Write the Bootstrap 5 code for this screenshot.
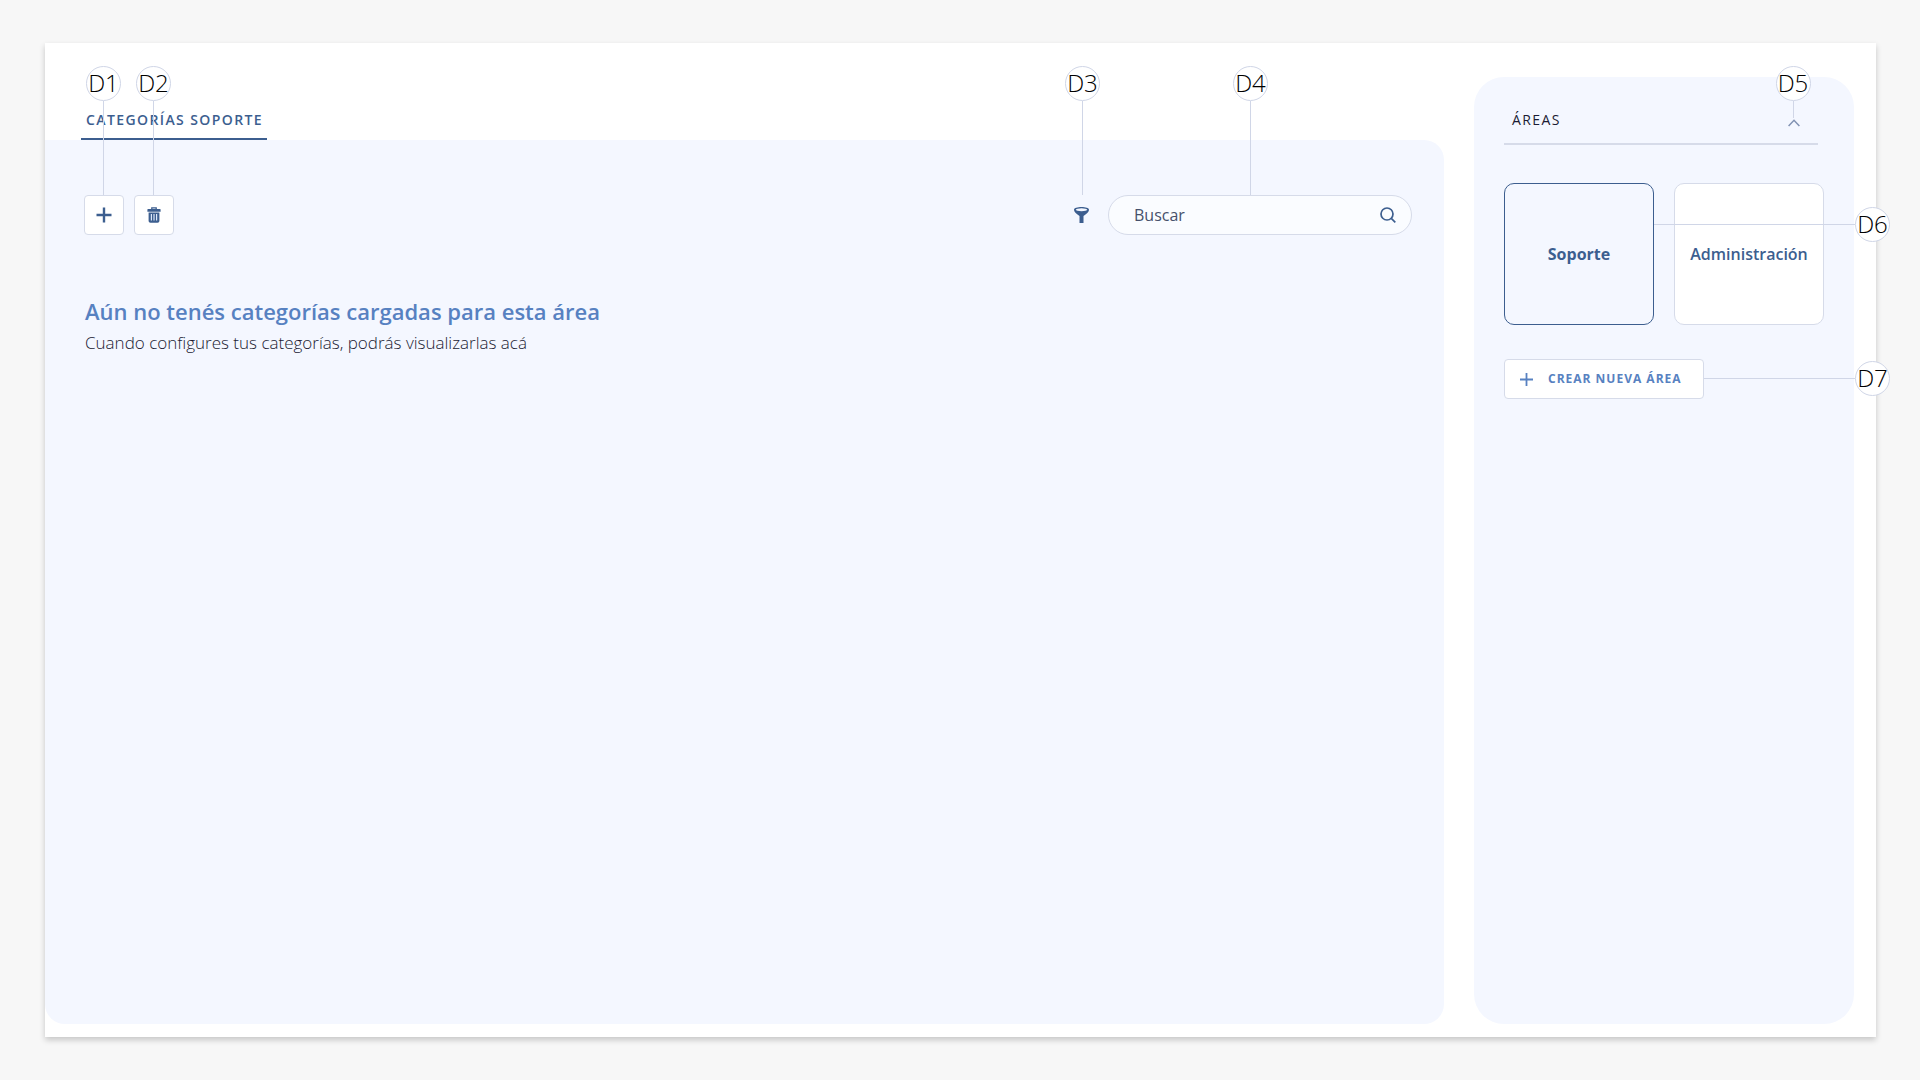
<!DOCTYPE html>
<html lang="es">
<head>
<meta charset="utf-8">
<meta name="viewport" content="width=device-width, initial-scale=1">
<title>Categorías soporte</title>
<link href="https://cdn.jsdelivr.net/npm/bootstrap@5.3.0/dist/css/bootstrap.min.css" rel="stylesheet">
<style>
  :root { --navy: #3c5e8f; --blue: #5781c1; --line: #d6dbe9; --stem: #d0d6e7; --panel: #f4f7ff; --ink: #1b1b33; }
  body { font-family: "Open Sans", "Noto Sans", sans-serif; background: #f7f7f7; color: var(--ink); }
  .page-frame { padding: 43px 44px 43px 45px; }
  .sheet { background: #fff; box-shadow: 0 3px 6px rgba(0,0,0,.2); padding: 0 22px 13px 0; gap: 30px; }
  .tab-strip { padding: 54px 36px 0; }
  .tab-link { display: block; color: var(--navy); font-size: 14px; line-height: 20px; font-weight: 600; letter-spacing: .1em;
    padding: 13px 4px 8px 5px; border-bottom: 2px solid var(--navy); text-decoration: none; white-space: nowrap; height: 43px; }
  .main-panel { background: var(--panel); border-radius: 0 20px 20px 20px; padding: 55px 32px 32px 39px; }
  .tool-list { gap: 10px; }
  .search-list { gap: 18px; }
  .tool-btn { width: 40px; height: 40px; background: #fff; border: 1px solid var(--line); border-radius: 4px; color: var(--navy); }
  .tool-btn:hover { background: #fff; border-color: var(--navy); color: var(--navy); }
  .filter-btn { width: 18px; height: 40px; border: 0; background: none; color: var(--navy); }
  .search-box { width: 304px; height: 40px; background: #fafcff; border: 1px solid var(--line); border-radius: 20px; padding: 0 15px 0 25px; color: var(--navy); }
  .search-box input { font-size: 16px; border: 0; background: none; outline: 0; min-width: 0; color: #46506b; }
  .search-box input::placeholder { color: #46506b; opacity: 1; }
  .search-box button { border: 0; background: none; color: var(--navy); width: 16px; }
  .empty-note { margin-top: 61px; padding-left: 1px; }
  .empty-title { color: var(--blue); font-size: 22px; line-height: 30px; font-weight: 600; margin: 0 0 5px; }
  .empty-text { font-size: 17px; line-height: 24px; font-weight: 300; }
  .side-panel { width: 380px; margin-top: 34px; background: var(--panel); border-radius: 30px; padding: 24px 30px 30px; }
  .area-head { border-bottom: 2px solid var(--line); padding: 0 16px 0 8px; margin-right: 6px; height: 44px; }
  .area-head h2 { font-size: 14px; line-height: 38px; font-weight: 500; letter-spacing: .1em; }
  .fold-spot { margin-top: 17px; }
  .fold-btn { width: 17px; height: 10px; border: 0; background: none; color: #8192b3; }
  .area-list { gap: 20px; margin-top: 38px; margin-bottom: 34px; }
  .area-tile { width: 150px; height: 142px; background: #fff; border: 1px solid var(--line); border-radius: 10px; color: var(--navy); font-size: 16px; font-weight: 600; }
  .area-tile.chosen { background: var(--panel); border-color: var(--navy); font-weight: 700; }
  .new-area { width: 200px; height: 40px; background: #fff; border: 1px solid var(--line); border-radius: 4px; color: var(--blue);
    font-size: 12px; font-weight: 700; letter-spacing: 1px; padding: 0 15px; gap: 15px; white-space: nowrap; }
  /* numbered callouts: a ring and the stem that ties it to its control */
  .callout { position: absolute; display: flex; align-items: center; pointer-events: none; z-index: 2; }
  .callout b { width: 35px; height: 35px; flex: none; background: #fff; border: 1px solid var(--stem); border-radius: 50%; color: #000;
    font-size: 24px; line-height: 32px; font-weight: 300; display: flex; justify-content: center; }
  .callout i { background: var(--stem); }
  .callout-up { flex-direction: column; bottom: 100%; left: 50%; margin-left: -18px; }
  .callout-up i { width: 1px; height: 94px; }
  .callout-up.stem-short i { height: 17px; }
  .callout-filter { margin-left: -16px; }
  .callout-search { margin-left: -27px; }
  .callout-right { left: 100%; }
  .callout-right i { height: 1px; width: 151px; }
  .callout-right.stem-long i { width: 201px; }
  .callout-tile { top: 24px; }
  .callout-new { top: 2px; }
</style>
<script src="https://cdn.jsdelivr.net/npm/bootstrap@5.3.0/dist/js/bootstrap.bundle.min.js"></script>
</head>
<body>
<div class="page-frame min-vh-100 d-flex">
  <div class="sheet d-flex flex-grow-1">
    <main class="d-flex flex-column flex-grow-1">
      <nav class="tab-strip d-flex">
        <a class="tab-link" href="#categorias" aria-current="page">CATEGORÍAS SOPORTE</a>
      </nav>
      <section class="main-panel flex-grow-1" id="categorias">
        <div class="d-flex justify-content-between">
          <div class="tool-list d-flex">
            <div class="position-relative">
              <button class="tool-btn btn p-0 d-flex align-items-center justify-content-center" type="button" aria-label="Agregar">
                <svg width="16" height="16" viewBox="0 0 16 16"><path d="M8 .5v15M.5 8h15" stroke="currentColor" stroke-width="2.4"/></svg>
              </button>
              <span class="callout callout-up"><b>D1</b><i></i></span>
            </div>
            <div class="position-relative">
              <button class="tool-btn btn p-0 d-flex align-items-center justify-content-center" type="button" aria-label="Eliminar">
                <svg width="14" height="16" viewBox="0 0 14 16"><path d="M4.8 2V.9h4.4V2" fill="none" stroke="currentColor" stroke-width="1.3"/><path d="M1 2h12q.6 0 .6.7V4.700H.4V2.700Q.4 2 1 2z" fill="currentColor"/><path d="M1.600 5.600h10.800v8.400q0 1.800-1.800 1.800H3.400q-1.800 0-1.800-1.800z" fill="currentColor"/><path d="M4.400 7v6.500M7 7v6.500M9.600 7v6.500" stroke="#dce7f8" stroke-width="1.2"/></svg>
              </button>
              <span class="callout callout-up"><b>D2</b><i></i></span>
            </div>
          </div>
          <div class="search-list d-flex">
            <div class="position-relative">
              <button class="filter-btn p-0 d-flex align-items-center justify-content-center" type="button" aria-label="Filtrar">
                <svg width="15" height="16" viewBox="0 0 15 16"><path d="M7.500 0C11.500 0 15 .9 15 2.700 15 5 13 6.500 9.500 9v7h-4V9C2 6.500 0 5 0 2.700 0 .9 3.500 0 7.500 0z" fill="currentColor"/><ellipse cx="7.500" cy="2.700" rx="5.700" ry="1.500" fill="#f4f7ff"/></svg>
              </button>
              <span class="callout callout-up callout-filter"><b>D3</b><i></i></span>
            </div>
            <div class="position-relative">
              <form class="search-box d-flex align-items-center" role="search">
                <input class="flex-grow-1 p-0" type="text" placeholder="Buscar" aria-label="Buscar">
                <button class="p-0 d-flex align-items-center" type="button" aria-label="Buscar ahora">
                  <svg width="16" height="16" viewBox="0 0 16 16" fill="none" stroke="currentColor" stroke-width="1.700"><circle cx="7" cy="7" r="6"/><path d="M11.300 11.300l4 4"/></svg>
                </button>
              </form>
              <span class="callout callout-up callout-search"><b>D4</b><i></i></span>
            </div>
          </div>
        </div>
        <div class="empty-note">
          <h1 class="empty-title">Aún no tenés categorías cargadas para esta área</h1>
          <p class="empty-text m-0">Cuando configures tus categorías, podrás visualizarlas acá</p>
        </div>
      </section>
    </main>
    <aside class="side-panel flex-shrink-0">
      <div class="area-head d-flex justify-content-between align-items-start">
        <h2 class="m-0">ÁREAS</h2>
        <div class="fold-spot position-relative">
          <button class="fold-btn p-0 d-flex align-items-center justify-content-center" type="button" aria-label="Plegar áreas">
            <svg width="12" height="8" viewBox="0 0 12 8" fill="none" stroke="currentColor" stroke-width="1.500"><path d="M.6 7L6 1.300 11.400 7"/></svg>
          </button>
          <span class="callout callout-up stem-short"><b>D5</b><i></i></span>
        </div>
      </div>
      <div class="area-list d-flex">
        <div class="position-relative">
          <button class="area-tile chosen btn p-0" type="button" aria-pressed="true">Soporte</button>
          <span class="callout callout-right stem-long callout-tile"><i></i><b>D6</b></span>
        </div>
        <button class="area-tile btn p-0" type="button" aria-pressed="false">Administración</button>
      </div>
      <div class="position-relative d-inline-block">
        <button class="new-area btn d-flex align-items-center" type="button">
          <svg width="13" height="13" viewBox="0 0 13 13"><path d="M6.500 0v13M0 6.500h13" stroke="currentColor" stroke-width="1.800"/></svg>CREAR NUEVA ÁREA
        </button>
        <span class="callout callout-right callout-new"><i></i><b>D7</b></span>
      </div>
    </aside>
  </div>
</div>
</body>
</html>
